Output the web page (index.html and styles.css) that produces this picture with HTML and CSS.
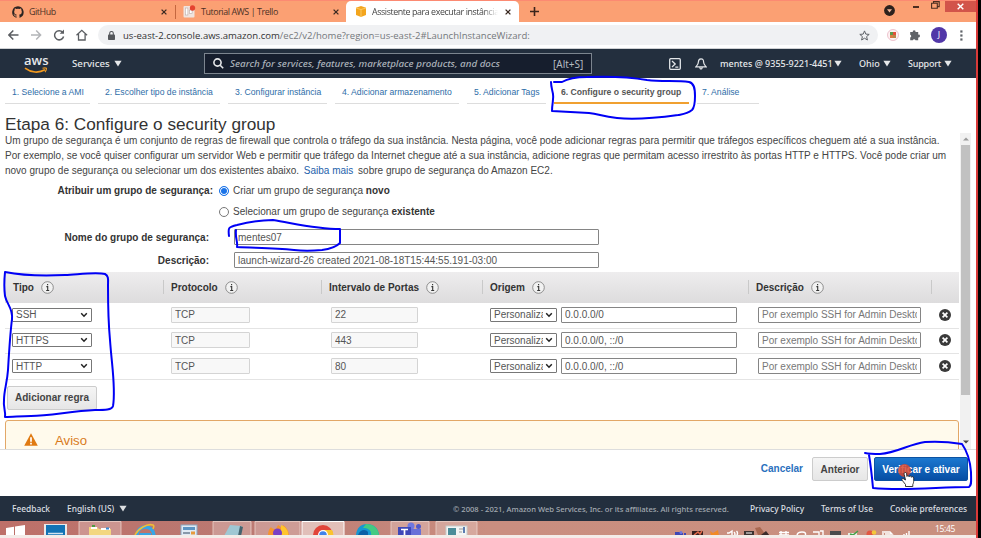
FILE: index.html
```html
<!DOCTYPE html>
<html lang="pt-BR">
<head>
<meta charset="utf-8">
<title>Assistente para executar instância</title>
<link rel="stylesheet" href="styles.css">
</head>
<body>
<svg class="defs" width="0" height="0">
  <symbol id="info" viewBox="0 0 13 13"><circle cx="6.5" cy="6.5" r="5.8" fill="#f2f2f2" stroke="#777" stroke-width=".8"/><path d="M5.400 5.600h1.300v3.800M5.200 9.500h3M6.600 3v1.300" fill="none" stroke="#333" stroke-width="1.100"/></symbol>
  <symbol id="remove" viewBox="0 0 12 12"><circle cx="6" cy="6" r="6" fill="#3a3a3a"/><path d="M3.6 3.6l4.8 4.8M8.4 3.6L3.6 8.4" stroke="#fff" stroke-width="1.7"/></symbol>
  <symbol id="chev" viewBox="0 0 8 6"><path d="M1.2 1.3L4 4.2l2.8-2.9" fill="none" stroke="#222" stroke-width="1.5"/></symbol>
  <symbol id="close" viewBox="0 0 6 6"><path d="M.6.6l4.8 4.8M5.4.6L.6 5.4" stroke="#3b2a22" stroke-width="1.3"/></symbol>
  <symbol id="caret" viewBox="0 0 8 6"><path d="M.4.2h7.2L4 5.9z" fill="currentColor"/></symbol>
</svg>
<div class="screen">
  <div class="tabs">
    <div class="tab tab-a">
      <svg width="12" height="12" viewBox="0 0 16 16"><path fill="#2b2422" d="M8 .2a8 8 0 0 0-2.5 15.5c.4.1.5-.2.5-.4v-1.5c-2.200.5-2.700-1-2.700-1-.4-.9-.9-1.200-.9-1.200-.7-.5.1-.5.1-.5.8.1 1.200.8 1.200.8.7 1.200 1.900.9 2.300.7.100-.5.300-.9.500-1.100-1.800-.2-3.600-.9-3.600-4 0-.9.300-1.600.8-2.100-.1-.2-.4-1 .1-2.100 0 0 .7-.2 2.200.8a7.500 7.500 0 0 1 4 0c1.500-1 2.200-.8 2.200-.8.4 1.100.2 1.900.1 2.100.5.500.8 1.200.8 2.100 0 3.100-1.900 3.800-3.700 4 .3.300.6.8.6 1.500v2.200c0 .2.100.5.500.4A8 8 0 0 0 8 .2z"/></svg>
      <span class="tab-t">GitHub</span>
      <svg class="x" width="6" height="6"><use href="#close"/></svg>
    </div>
    <div class="tab tab-b">
      <svg width="13" height="13" viewBox="0 0 13 13"><rect x=".5" y="1" width="11" height="11.500" rx="1" fill="#f0e4df"/><rect x="2.300" y="3" width="2.600" height="7" fill="#fff" stroke="#b9a9a5" stroke-width=".6"/><rect x="6.500" y="5" width="2.600" height="3.500" fill="#fff" stroke="#b9a9a5" stroke-width=".6"/><circle cx="9.500" cy="3" r="2.700" fill="#e5432f"/></svg>
      <span class="tab-t">Tutorial AWS | Trello</span>
      <svg class="x" width="6" height="6"><use href="#close"/></svg>
    </div>
    <div class="tab tab-c">
      <svg width="10" height="11" viewBox="0 0 10 11"><path d="M5 0l5 1.800v7.200L5 11 0 9V1.800z" fill="#f3a51d"/><path d="M0 2l5 1.500L10 2M5 3.500V11" fill="none" stroke="#fbd074" stroke-width=".8"/></svg>
      <span class="tab-t">Assistente para executar instância</span>
      <svg class="x" width="6" height="6"><use href="#close"/></svg>
    </div>
    <svg class="plus" width="9" height="9" viewBox="0 0 9 9"><path d="M4.500 0v9M0 4.500h9" stroke="#3b241b" stroke-width="1.600"/></svg>
    <div class="winbtns">
      <svg class="dot" width="11" height="11" viewBox="0 0 11 11"><circle cx="5.500" cy="5.500" r="5.400" fill="#2c211d"/><path d="M3 4.200h5L5.500 7.400z" fill="#f3b79a"/></svg>
      <svg class="min" width="6" height="2"><rect width="6" height="2" fill="#4b2d20"/></svg>
      <svg class="rest" width="9" height="8" viewBox="0 0 9 8"><path d="M2.500 2V.6h5.700v5H6.800M.6 2.200h5.700v5H.6z" fill="none" stroke="#4b2d20" stroke-width="1.100"/></svg>
      <div class="winclose"><svg width="7" height="7" viewBox="0 0 6 6"><path d="M.6.6l4.800 4.800M5.400.6L.6 5.400" stroke="#fff" stroke-width="1.200"/></svg></div>
    </div>
  </div>

  <div class="toolbar">
    <svg class="nav-ic" width="88" height="14" viewBox="0 0 88 14" fill="none" stroke="#5b5e62" stroke-width="1.500">
      <path d="M10.500 7H1M5.300 2.500L.9 7l4.400 4.500"/>
      <path d="M23 7h9.500M28.200 2.500L32.600 7l-4.400 4.500" stroke="#b3b5b8"/>
      <path d="M54.700 4.300A4.600 4.600 0 1 0 55.600 8.500"/><path d="M56 1.500v4.300h-4.300z" fill="#5b5e62" stroke="none"/>
      <path d="M68.500 7.300l5.300-5 5.300 5M70.500 6v6h6.600V6" stroke-width="1.300"/>
    </svg>
    <div class="omni">
      <svg width="7" height="9" viewBox="0 0 7 9"><rect y="3.500" width="7" height="5.500" rx=".8" fill="#55585c"/><path d="M1.700 4V2.300a1.800 1.800 0 0 1 3.600 0V4" fill="none" stroke="#55585c" stroke-width="1.100"/></svg>
      <span class="url"><b>us-east-2.console.aws.amazon.com</b>/ec2/v2/home?region=us-east-2#LaunchInstanceWizard:</span>
      <svg class="star" width="11" height="11" viewBox="0 0 11 11"><path d="M5.500.9l1.300 3.200 3.400.3-2.600 2.200.8 3.400-2.900-1.800L2.600 10l.8-3.400L.8 4.400l3.400-.3z" fill="none" stroke="#5f6368" stroke-width="1"/></svg>
    </div>
    <svg class="ext" width="12" height="12" viewBox="0 0 12 12"><circle cx="6" cy="6" r="5.500" fill="#fdf2f3" stroke="#e8b5c3" stroke-width=".8"/><path d="M3 3h3v3H3z" fill="#5a9c4b"/><path d="M6 3h3v3H6z" fill="#e2503b"/><path d="M3 6h3v3H3z" fill="#dd7a45"/><path d="M6 6h3v3H6z" fill="#b88848"/></svg>
    <svg class="puz" width="12" height="12" viewBox="0 0 12 12"><path fill="#5f6368" d="M1.200 3h2.600a1.400 1.400 0 1 1 2.700 0H9.200v2.700a1.400 1.400 0 1 1 0 2.700V11.300H6.500a1.400 1.400 0 0 0-2.700 0H1.200V8.500a1.400 1.400 0 0 0 0-2.700z"/></svg>
    <span class="avatar">J</span>
    <svg class="dots" width="3" height="11"><g fill="#5f6368"><rect width="2.200" height="2.200" x=".3" y=".4"/><rect width="2.200" height="2.200" x=".3" y="4.400"/><rect width="2.200" height="2.200" x=".3" y="8.400"/></g></svg>
  </div>

  <header class="awsnav">
    <div class="logo"><span>aws</span><svg width="24" height="7" viewBox="0 0 24 7"><path d="M1 1.200c6 4.600 14 5 20 1.600" fill="none" stroke="#f39a1f" stroke-width="1.700"/><path d="M18.500 1.300c1.800-.5 3.200-.5 3.900-.1.200.900-.3 2.500-1.400 3.900" fill="none" stroke="#f39a1f" stroke-width="1.100"/></svg></div>
    <span class="services">Services</span><svg class="car" width="8" height="7"><use href="#caret"/></svg>
    <div class="search">
      <svg width="11" height="11" viewBox="0 0 11 11" fill="none" stroke="#e6e8ea" stroke-width="1.600"><circle cx="4.500" cy="4.500" r="3.600"/><path d="M7.200 7.200l3 3"/></svg>
      <span class="ph">Search for services, features, marketplace products, and docs</span>
      <span class="key">[Alt+S]</span>
    </div>
    <svg class="shell" width="12" height="12" viewBox="0 0 12 12" fill="none" stroke="#e3e6e9" stroke-width="1.300"><rect x=".7" y=".7" width="10.600" height="10.600" rx="1"/><path d="M3 3l3.200 3L3 9M6.300 9.200h3"/></svg>
    <svg class="bell" width="12" height="12" viewBox="0 0 12 12" fill="none" stroke="#e3e6e9" stroke-width="1.200"><path d="M6 .8c-2 0-2.600 1.500-2.600 3.200C3.400 6.500 2.500 7 .8 8.800h10.400C9.500 7 8.600 6.500 8.600 4 8.600 2.300 8 .8 6 .8zM4.800 9.300c0 2.300 2.400 2.300 2.400 0"/></svg>
    <span class="acct">mentes @ 9355-9221-4451</span><svg class="car" width="8" height="7"><use href="#caret"/></svg>
    <span class="ohio">Ohio</span><svg class="car" width="8" height="7"><use href="#caret"/></svg>
    <span class="supp">Support</span><svg class="car" width="8" height="7"><use href="#caret"/></svg>
  </header>

  <nav class="steps">
    <a class="s1">1. Selecione a AMI</a><a class="s2">2. Escolher tipo de instância</a><a class="s3">3. Configurar instância</a><a class="s4">4. Adicionar armazenamento</a><a class="s5">5. Adicionar Tags</a><a class="s6">6. Configure o security group</a><a class="s7">7. Análise</a>
  </nav>
  <h1>Etapa 6: Configure o security group</h1>

  <div class="scroller">
    <main>
      <p class="intro"><span class="l1">Um grupo de segurança é um conjunto de regras de firewall que controla o tráfego da sua instância. Nesta página, você pode adicionar regras para permitir que tráfegos específicos cheguem até a sua instância.</span><br><span class="l2">Por exemplo, se você quiser configurar um servidor Web e permitir que tráfego da Internet chegue até a sua instância, adicione regras que permitam acesso irrestrito às portas HTTP e HTTPS. Você pode criar um</span><br><span class="l3">novo grupo de segurança ou selecionar um dos existentes abaixo. <a>Saiba mais</a> sobre grupo de segurança do Amazon EC2.</span></p>
      <div class="field f1"><label class="w">Atribuir um grupo de segurança:</label><i class="radio on"></i><span>Criar um grupo de segurança <b>novo</b></span></div>
      <div class="field f2"><label></label><i class="radio"></i><span>Selecionar um grupo de segurança <b>existente</b></span></div>
      <div class="field f3"><label>Nome do grupo de segurança:</label><input value="mentes07"></div>
      <div class="field f4"><label>Descrição:</label><input value="launch-wizard-26 created 2021-08-18T15:44:55.191-03:00"></div>

      <section class="table">
        <div class="row head">
          <div><span>Tipo</span><svg width="13" height="13"><use href="#info"/></svg></div>
          <div><span>Protocolo</span><svg width="13" height="13"><use href="#info"/></svg></div>
          <div><span>Intervalo de Portas</span><svg width="13" height="13"><use href="#info"/></svg></div>
          <div><span>Origem</span><svg width="13" height="13"><use href="#info"/></svg></div>
          <div><span>Descrição</span><svg width="13" height="13"><use href="#info"/></svg></div>
          <div></div>
        </div>
        <div class="row">
          <div><span class="sel tipo"><em>SSH</em><svg width="8" height="6"><use href="#chev"/></svg></span></div>
          <div><input class="dis proto" value="TCP" disabled></div>
          <div><input class="dis port" value="22" disabled></div>
          <div><span class="sel orig"><em>Personalizado</em><svg width="8" height="6"><use href="#chev"/></svg></span><input class="cidr" value="0.0.0.0/0"></div>
          <div><input class="desc" placeholder="Por exemplo SSH for Admin Desktop"></div>
          <div><svg width="12" height="12"><use href="#remove"/></svg></div>
        </div>
        <div class="row">
          <div><span class="sel tipo"><em>HTTPS</em><svg width="8" height="6"><use href="#chev"/></svg></span></div>
          <div><input class="dis proto" value="TCP" disabled></div>
          <div><input class="dis port" value="443" disabled></div>
          <div><span class="sel orig"><em>Personalizado</em><svg width="8" height="6"><use href="#chev"/></svg></span><input class="cidr" value="0.0.0.0/0, ::/0"></div>
          <div><input class="desc" placeholder="Por exemplo SSH for Admin Desktop"></div>
          <div><svg width="12" height="12"><use href="#remove"/></svg></div>
        </div>
        <div class="row">
          <div><span class="sel tipo"><em>HTTP</em><svg width="8" height="6"><use href="#chev"/></svg></span></div>
          <div><input class="dis proto" value="TCP" disabled></div>
          <div><input class="dis port" value="80" disabled></div>
          <div><span class="sel orig"><em>Personalizado</em><svg width="8" height="6"><use href="#chev"/></svg></span><input class="cidr" value="0.0.0.0/0, ::/0"></div>
          <div><input class="desc" placeholder="Por exemplo SSH for Admin Desktop"></div>
          <div><svg width="12" height="12"><use href="#remove"/></svg></div>
        </div>
      </section>
      <button class="btn add">Adicionar regra</button>
      <div class="warn"><svg width="14" height="13" viewBox="0 0 14 13"><path d="M7 .3L13.800 12.800H.2z" fill="#e07a12"/><path d="M7 4.300v4.400M7 9.800v1.600" stroke="#fff" stroke-width="1.700"/></svg><span>Aviso</span></div>
    </main>
    <div class="bar"><svg class="up" width="6" height="4"><path d="M0 3.500h6L3 .5z" fill="#9a9a9a"/></svg><div class="thumb"></div><svg class="down" width="6" height="4"><path d="M0 .5h6L3 3.500z" fill="#444"/></svg></div>
  </div>

  <div class="actions"><a>Cancelar</a><button class="btn prev">Anterior</button><button class="btn go">Verificar e ativar</button></div>

  <footer><span class="fb">Feedback</span><span class="lang">English (US)</span><svg class="car" width="8" height="7"><use href="#caret"/></svg><span class="copy">© 2008 - 2021, Amazon Web Services, Inc. or its affiliates. All rights reserved.</span><span class="pp">Privacy Policy</span><span class="tu">Terms of Use</span><span class="cp">Cookie preferences</span></footer>

  <div class="taskbar">
    <svg width="976" height="14" viewBox="0 0 976 14">
      <path d="M6 7l8-1.300V14H6zM15 5.500l10-1.500v10H15z" fill="#fff"/>
      <rect x="44" y="3" width="23" height="12" fill="#e9e9e9"/><rect x="46" y="4" width="19" height="10" fill="#1173b5"/><path d="M48 12.500h15" stroke="#cfe2ef" stroke-width="1.500"/>
      <g fill="#fff" fill-opacity=".24" stroke="#ecd3cb" stroke-width=".8"><path d="M79 15V.5h42V15M213 15V.5h38V15M255 15V.5h45V15M391 15V.5h38V15M436 15V.5h41V15"/></g><path d="M302 15V.5h42V15" fill="#f0dcd6" fill-opacity=".7" stroke="#fff"/>
      <path d="M89 14V6h8l2 2h12v6z" fill="#f3d780"/><path d="M91 6h6v2h-6zM101 7h9v2h-9z" fill="#fff"/><path d="M92 5h3" stroke="#4d9c41" stroke-width="2"/><path d="M106 7.500h3" stroke="#398bd2" stroke-width="2"/>
      <path d="M137 15c0-6 4-9 8.500-9s8 3 8.500 9" fill="none" stroke="#37a6e6" stroke-width="3.500"/><path d="M135 14c3-6 12-12 18-10 1 .5 1 2 0 4" fill="none" stroke="#f0bd35" stroke-width="1.600"/><path d="M140 13h11" stroke="#37a6e6" stroke-width="2"/>
      <rect x="181" y="4" width="16" height="12" fill="#dfeaf4" stroke="#8ba9c2"/><rect x="183" y="6" width="12" height="3" fill="#5d95c4"/><path d="M183 12h7" stroke="#89a" stroke-width="2"/><rect x="191" y="10.500" width="4" height="3" fill="#e79a3d"/>
      <path d="M224 15l6-11 12 1-2 10z" fill="#9fc7d3"/><path d="M240 5l3 1-2 9h-3z" fill="#44636e"/>
      <path d="M268 15c0-4 1-7 3-9 1 2 3 2 5 2l2-4c2 1 3 2 4 4l1-4c4 3 6 6 6 11z" fill="#f7942c"/><path d="M281 4c5 2 8 6 7 11h-7z" fill="#ffc52d"/><circle cx="277.500" cy="12" r="4.500" fill="#7b3fc4"/>
      <circle cx="323" cy="14" r="10" fill="#e1453a"/><path d="M313 14a10 10 0 0 0 1 4h7v-4z" fill="#37a355"/><path d="M323 9h9a10 10 0 0 1 1 8h-8z" fill="#fbc42f"/><circle cx="323" cy="14" r="5" fill="#fff"/><circle cx="323" cy="14" r="3.800" fill="#4283ea"/>
      <path d="M356 15c0-8 5-12 11-12s12 4 12 12z" fill="#1697d2"/><path d="M366 3c8 0 13 5 13 12h-8c1-6-3-8-8-8z" fill="#43ca82"/><path d="M358 14c2-6 8-6 10-3v4z" fill="#0c5fa6"/>
      <circle cx="411" cy="5" r="3.500" fill="#6e77e0"/><circle cx="418.500" cy="5.500" r="2.500" fill="#5059c9"/><path d="M404 8h17v7h-17z" fill="#6770d8"/><rect x="398" y="6" width="13" height="9" fill="#3f48b8"/><path d="M401 8.500h7M404.500 8.500V14" stroke="#fff" stroke-width="1.700"/>
      <rect x="446" y="5" width="21" height="10" fill="#f3f5f4" stroke="#c6ccca"/><rect x="448" y="7" width="8" height="7" fill="#4b8d99"/><path d="M459 8h4M459 11h3" stroke="#999"/><path d="M464 6v6" stroke="#28539b" stroke-width="1.500"/>
      <path d="M675 14v-3h5V12h3v3M684 14v-2h2v3" fill="#3d46b4"/><circle cx="681" cy="11.500" r="1.500" fill="#6e77e0"/><rect x="692" y="10" width="11" height="6" fill="#35201f"/><path d="M694 14l4-3 2 2 2-3" stroke="#e26a4b" stroke-width="1.500" fill="none"/><path d="M710 10l3 2 5-3 1 6h-8z" fill="#f18a26"/>
      <g stroke="#fff" stroke-width="1.400" fill="none"><path d="M727 12h2l3-2v6M734 11q2 2 0 4M736.500 10q2 2 0 5"/><path d="M779 11.500h10M779 14h10M781 10v6M786 10v6"/><path d="M797 15q0-4 5-4t3 4M813 11h6v4h-3M820 10h3v4"/><path d="M904 15v-2M906.500 15v-3M909 15v-5"/><path d="M883 10v6M884 11h6l2 2h-7"/></g>
      <rect x="744" y="10" width="10" height="6" fill="#3b3230"/><path d="M746 12h6" stroke="#fff"/><path d="M755 7l5-1 6 8h-8z" fill="#a15e45" fill-opacity=".8"/><path d="M761 14l5-4 4 5" fill="#3a2b2a"/><rect x="830" y="10" width="11" height="6" fill="#4a4b4d"/><path d="M848 12h9v3h-9z" fill="#e8efe5"/><path d="M850 13l3 1 5-4" stroke="#43a047" stroke-width="1.500" fill="none"/><circle cx="870" cy="13" r="3.500" fill="#e25742"/><circle cx="874" cy="11.500" r="2.300" fill="#f3c63c"/>
    </svg>
    <span class="clock">15:45</span>
  </div>
  <div class="strip"></div>
</div>

<svg class="ink" width="981" height="538" viewBox="0 0 981 538">
  <circle cx="904.500" cy="470.500" r="6.500" fill="#d9482f" fill-opacity=".85"/>
  <path d="M905.500 472.500c-1.300 0-1.500 1-1.300 2l1.300 5.500-2-1.300c-1.200-.6-2.100.5-1.400 1.500l3.400 4.300v2h7.300v-2c.6-1.200.9-2.200.9-4.200v-2.200c0-1.600-1.800-1.800-2.200-.8 0-1.500-2-1.600-2.400-.5-.2-1.300-1.800-1.400-2.200-.4l-.3-2.700c-.1-.8-.4-1.200-1.100-1.200z" fill="#fff" stroke="#222" stroke-width=".9"/>
  <g fill="none" stroke="#0000f5" stroke-width="2" stroke-linecap="round" stroke-linejoin="round">
    <path d="M554 82h8c5-3 14-5 25-5 25-1 43 0 60 3 15 2 30 0 42 2 5 1 6 6 6 14 0 6 0 11-3 14-5 4-8 4-14 5-22 3-43 5-61 3-16-2-18-4-28-5l-37-2c0-8 2-12 1-17s-2-8-2-12"/>
    <path d="M229 236c-1-8-1-9 8-11 12-3 24-5 36-5 24 4 44 9 67 9v14c-4 4-10 6-18 7-10 1-20 1-28 0-20-2-38-2-57-3 1-5-2-9-1-17"/>
    <path d="M5 272c20 4 40 4 60 3 17-1 32-3 40-1 4 2 3 6 3 12 0 17 0 33 2 54 2 28 6 49 3 66-1 4-8 4-18 4-24 1-45 6-64 6-10 0-18 1-26 1 1-5-2-10-1-17 0-10 3-16 4-30 1-17 2-35 4-51 1-11-5-14-7-23-1-8-1-14 0-24"/>
    <path d="M865 453c5 1 10 1 15 1 17-1 29-10 45-12 13-1 25 0 37 2 5 7 8 15 9 28 0 9 1 13-2 15-22 0-45 2-68 2-11 0-19 0-28-1-1-11-2-21-4-33"/>
  </g>
</svg>
</body>
</html>
```
FILE: styles.css
```css
* { box-sizing: border-box; }
body { margin: 0; width: 981px; height: 538px; overflow: hidden; background: #000; font-family: "Liberation Sans", Arial, sans-serif; font-size: 10px; color: #444; position: relative; }
svg { display: block; flex: none; }
.defs { position: absolute; }
.screen { width: 978px; height: 538px; border-right: 2px solid #d93a39; background: #fff; display: flex; flex-direction: column; }
span, a, label, b { white-space: nowrap; }

.tabs { height: 22px; flex: none; background: #fba073; border-top: 1px solid #fc8a72; display: flex; align-items: center; font: 8.9px "Open Sans", sans-serif; letter-spacing: -.42px; color: #4c3025; }
.tab { display: flex; align-items: center; height: 18px; flex: none; }
.tab-a { width: 176px; padding-left: 12px; border-right: 1px solid #c4673f; height: 14px; }
.tab-a .tab-t { width: 132px; margin-left: 5px; }
.tab-b { width: 170px; padding-left: 7px; }
.tab-b .tab-t { width: 132px; margin-left: 5px; }
.tab-c { width: 173px; height: 21px; padding-left: 10px; background: #fff; border-radius: 5px 5px 0 0; color: #444; }
.tab-c .tab-t { width: 126px; margin-left: 6px; margin-right: 7px; overflow: hidden; -webkit-mask-image: linear-gradient(90deg, #000 88%, transparent); }
.plus { margin-left: 11px; }
.winbtns { display: flex; margin-left: auto; width: 92px; height: 21px; align-items: flex-start; }
.dot { margin-top: 4px; margin-right: 18px; }
.min { margin-top: 5px; margin-right: 12px; }
.rest { margin-right: 5px; }
.winclose { background: #d2544a; width: 31px; height: 11px; display: flex; justify-content: center; align-items: center; }

.toolbar { height: 27px; flex: none; display: flex; align-items: center; border-bottom: 1px solid #cfd1d4; }
.nav-ic { margin-left: 8px; width: 88px; }
.omni { width: 780px; height: 20px; margin-left: 2px; border-radius: 10px; background: #f0f1f3; display: flex; align-items: center; padding-left: 10px; }
.url { margin-left: 8px; font: 9.56px "Open Sans", sans-serif; color: #75787c; width: 736px; }
.url b { font-weight: 400; color: #333; }
.ext { margin-left: 9px; }
.puz { margin-left: 10px; }
.avatar { width: 16px; height: 16px; border-radius: 50%; background: #5137a8; color: #fff; text-align: center; font: 9px/16px "Open Sans", sans-serif; margin-left: 10px; }
.dots { margin-left: 13px; }

.awsnav { height: 29px; flex: none; background: #232f3e; display: flex; align-items: center; color: #e6e8ea; font: 500 9px "Noto Sans", sans-serif; }
.logo { width: 24px; margin-left: 24px; height: 20px; }
.logo span { display: block; font: 600 13px/12px "Open Sans", sans-serif; text-align: center; }
.logo svg { margin-top: 1px; }
.services { width: 38px; margin-left: 24px; font-size: 9.700px; }
.car { margin-left: 4px; width: 8px; }
.search { width: 388px; height: 21px; margin-left: 82px; border: 1px solid #7c858f; background: #161e2d; display: flex; align-items: center; padding-left: 8px; font-size: 10px; }
.ph { font-style: italic; width: 318px; margin-left: 6px; color: #aab1b9; font-size: 9.780px; }
.key { color: #b5bbc1; margin-left: 5px; font-weight: 400; }
.shell { margin-left: 77px; }
.bell { margin-left: 14px; }
.acct { width: 110px; margin-left: 13px; }
.ohio { width: 20px; margin-left: 17px; }
.supp { width: 32px; margin-left: 17px; letter-spacing: -.2px; }

.steps { height: 33px; flex: none; display: flex; padding: 3px 0 0 5px; font-size: 8.650px; color: #2e6da8; }
.steps a { height: 23px; line-height: 23px; border-bottom: 1px solid #ddd; padding-left: 7px; flex: none; margin-right: 8px; }
.steps .s1 { width: 85px; }
.steps .s2 { width: 122px; }
.steps .s3 { width: 99px; }
.steps .s4 { width: 124px; }
.steps .s5 { width: 79px; }
.steps .s6 { width: 135px; color: #555; font-weight: 700; border-bottom: 2px solid #f0a030; }
.steps .s7 { width: 62px; padding-left: 5px; }
h1 { margin: 0 0 0 5px; height: 22px; flex: none; font-size: 17.200px; line-height: 26px; font-weight: 400; color: #333; white-space: nowrap; }
.scroller { height: 317px; flex: none; display: flex; border-bottom: 1px solid #ddd; overflow: hidden; }
main { width: 954px; margin-left: 5px; flex: none; }
.intro { margin: 0; height: 45px; line-height: 15px; white-space: nowrap; }
.intro a { color: #2462ab; margin: 0 2px; }
.field { display: flex; align-items: center; height: 21px; }
.field label { width: 204px; text-align: right; font-weight: 700; color: #333; flex: none; }
.field label.w { width: 208px; }
.field b { color: #333; }
.f1 { margin-top: 2px; }
.f3 { margin-top: 3px; height: 24px; }
.f4 { height: 22px; }
.radio { width: 10px; height: 10px; border: 1px solid #777; border-radius: 50%; margin: 0 4px 0 6px; flex: none; background: #fff; }
.f2 .radio { margin-left: 10px; }
.radio.on { border: 1px solid #1a73e8; background: #1a73e8; box-shadow: inset 0 0 0 1px #fff; }
input { font: 10px "Liberation Sans", sans-serif; color: #555; border: 1px solid #858585; border-radius: 1px; height: 16px; padding: 0 3px; margin: 0; background: #fff; }
input::placeholder { color: #777; opacity: 1; }
.field input { width: 365px; margin-left: 25px; }

.table { margin-top: 1px; }
.row { display: grid; grid-template-columns: 158px 158px 161px 266px 183px 28px; height: 25.670px; border-bottom: 1px solid #e4e4e4; }
.row > div { display: flex; align-items: center; padding-left: 8px; padding-bottom: 1px; }
.head { height: 31px; background: linear-gradient(#eeedee, #dddcdd); border: 0; font-weight: 700; color: #333; }
.head > div + div { border-left: 1px solid #c9c9c9; height: 14px; margin-top: 8px; padding-left: 7px; padding-bottom: 0; }
.head svg { margin-left: 7px; }
.sel { height: 14px; border: 1px solid #777; border-radius: 1px; display: flex; align-items: center; padding: 0 3px; justify-content: space-between; background: #fff; color: #555; }
.sel em { font-style: normal; overflow: hidden; white-space: nowrap; }
.sel svg { margin-left: 2px; }
.tipo { width: 80px; }
.row .sel.tipo { margin-left: -1px; }
.orig { width: 67px; }
.dis { background: #f8f8f8; border-color: #d4d4d4; }
.proto { width: 79px; }
.port { width: 87px; margin-left: 2px; }
.cidr { width: 176px; margin-left: 4px; }
.desc { width: 163px; margin-left: 2px; }

.btn { font: 700 10px "Liberation Sans", sans-serif; color: #444; border: 1px solid #ccc; border-radius: 2px; background: linear-gradient(#f5f5f5, #e6e6e6); height: 24px; padding: 0; white-space: nowrap; }
.add { display: block; width: 90px; margin: 6px 0 0 2px; }
.warn { margin-top: 10px; height: 40px; border: 1px solid #e2a767; border-radius: 3px; background: #fffaec; color: #d97a1c; font-size: 13.200px; display: flex; padding: 12px 0 0 18px; }
.warn span { margin: 0 0 0 17px; }
.bar { width: 11px; margin-left: 1px; background: #f1f1f1; flex: none; display: flex; flex-direction: column; align-items: center; padding-top: 4px; }
.thumb { width: 9px; height: 250px; margin: 4px 0 45px; background: #c1c1c1; flex: none; }
.actions { height: 46px; flex: none; display: flex; justify-content: flex-end; padding: 7px 8px 0 0; }
.actions a { color: #2a70bd; font-weight: 700; line-height: 24px; margin-right: 9px; }
.prev { width: 56px; margin-right: 6px; }
.go { width: 94px; background: linear-gradient(#1c78d0, #064ea4); border-color: #0c52a2; color: #fff; }

footer { height: 25px; flex: none; background: #232f3e; display: flex; align-items: center; font: 500 8.400px "Noto Sans", sans-serif; color: #dcdfe2; }
.fb { width: 37px; margin-left: 12px; }
.lang { width: 48px; margin-left: 18px; }
.copy { width: 276px; margin-left: 326px; color: #a4abb2; font-size: 7.600px; }
.pp { width: 54px; margin-left: 21px; }
.tu { width: 51px; margin-left: 17px; }
.cp { width: 75px; margin-left: 18px; }
.taskbar { height: 14px; flex: none; background: linear-gradient(90deg, #bd7069 0, #bb7972 25%, #ca8e80 50%, #c9907f 100%); display: flex; position: relative; }
.clock { position: absolute; left: 935px; top: 2px; color: #fff; font: 8.500px/12px "Open Sans", sans-serif; letter-spacing: -.3px; }
.strip { height: 3px; background: #f4ece9; }
.ink { position: absolute; left: 0; top: 0; pointer-events: none; }
```
